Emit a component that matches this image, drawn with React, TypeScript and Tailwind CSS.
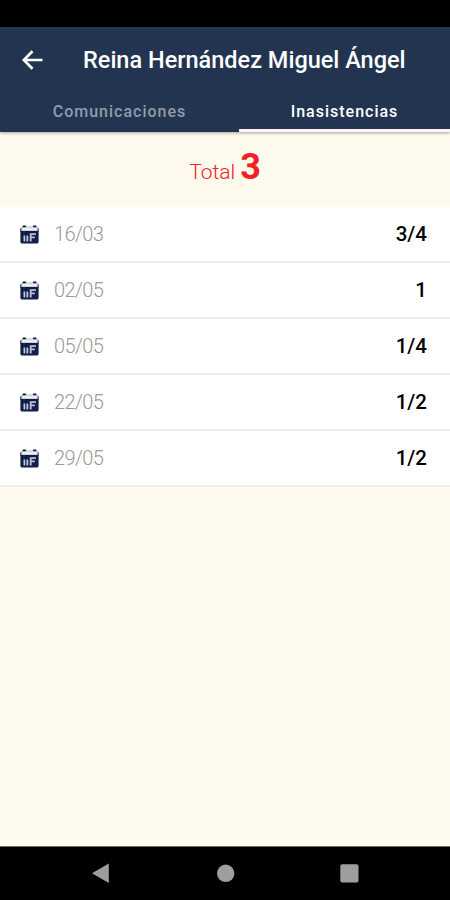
import React from "react";

const absences = [
  { date: "16/03", value: "3/4" },
  { date: "02/05", value: "1" },
  { date: "05/05", value: "1/4" },
  { date: "22/05", value: "1/2" },
  { date: "29/05", value: "1/2" },
];

const CalendarIcon = () => (
  <svg width="19" height="19" viewBox="0 0 19 19" className="shrink-0">
    <path d="M.6 6V3.4A2 2 0 0 1 2.6 1.4h13.8a2 2 0 0 1 2 2V6z" fill="#b9bfcb" />
    <path d="M2.2 2.6h14.6v2.8H2.2z" fill="#eceef2" />
    <path d="M3.4 1.3h1.8M13.8 1.3h1.8" stroke="#0c1838" strokeWidth="1.8" strokeLinecap="round" />
    <path d="M.4 6h18.2v10.4a2.2 2.2 0 0 1-2.2 2.2H2.6a2.2 2.2 0 0 1-2.2-2.2z" fill="#0f1d48" />
    <path d="M.8 3.4V7M18.2 3.4V7" stroke="#26345a" strokeWidth="1" />
    <path d="M4.4 10.6v6M7.4 10.6v6M10.7 8.4v8.2M9.9 9.2h6M9.9 12.4h5" stroke="#bcc5d6" strokeWidth="1.8" />
  </svg>
);

const Header = () => (
  <header className="relative z-10 h-[105px] bg-[#233450] text-white shadow-[0_1px_3px_rgba(0,0,0,0.35)]">
    <div className="flex h-[65px] items-center pl-[22px]">
      <svg width="21" height="20" viewBox="0 0 21 20" fill="none" stroke="white" strokeWidth="2.7">
        <path d="M20.5 10H2M10.5 1.2L1.8 10l8.7 8.8" />
      </svg>
      <h1 className="ml-[40px] whitespace-nowrap pt-[2px] text-[23.5px] font-medium leading-none">
        Reina Hernández Miguel Ángel
      </h1>
    </div>
    <nav className="flex h-[40px] text-[16px] font-medium tracking-[1px]">
      <div className="flex w-[239px] items-center justify-center text-[#929bab]">Comunicaciones</div>
      <div className="flex flex-1 items-center justify-center border-b-[3px] border-[#fbf6f4] pt-[3px]">
        Inasistencias
      </div>
    </nav>
  </header>
);

const App = () => {
  return (
    <div className="flex h-[900px] w-[450px] flex-col overflow-hidden bg-[#fffaee] font-['Roboto',sans-serif]">
      <div className="h-[27px] bg-black"></div>
      <Header />

      <div className="flex h-[75px] items-baseline justify-center pt-[15px] text-[#ee2226]">
        <span className="text-[21px] font-light">Total</span>
        <span className="ml-[5px] text-[36px] font-bold leading-[40px]">3</span>
      </div>

      <ul>
        {absences.map((item) => (
          <li
            key={item.date}
            className="flex h-[56px] items-center border-b-2 border-[#eeeeee] bg-white pl-[20px] pr-[23px]"
          >
            <CalendarIcon />
            <span className="ml-[15px] text-[20px] font-light tracking-[-0.6px] text-[#999999]">{item.date}</span>
            <span className="ml-auto text-[20.5px] font-medium text-black">{item.value}</span>
          </li>
        ))}
      </ul>

      <div className="mt-auto h-[54px] border-t border-[#6d6d68] bg-black">
        <svg width="450" height="53" viewBox="0 0 450 53" fill="#9e9e9e">
          <path d="M92 26.3L108.8 16.5V36z" />
          <circle cx="225.7" cy="26.3" r="8.7" />
          <rect x="340.3" y="17.2" width="18.2" height="18.4" rx="1.8" />
        </svg>
      </div>
    </div>
  );
};

export default App;
